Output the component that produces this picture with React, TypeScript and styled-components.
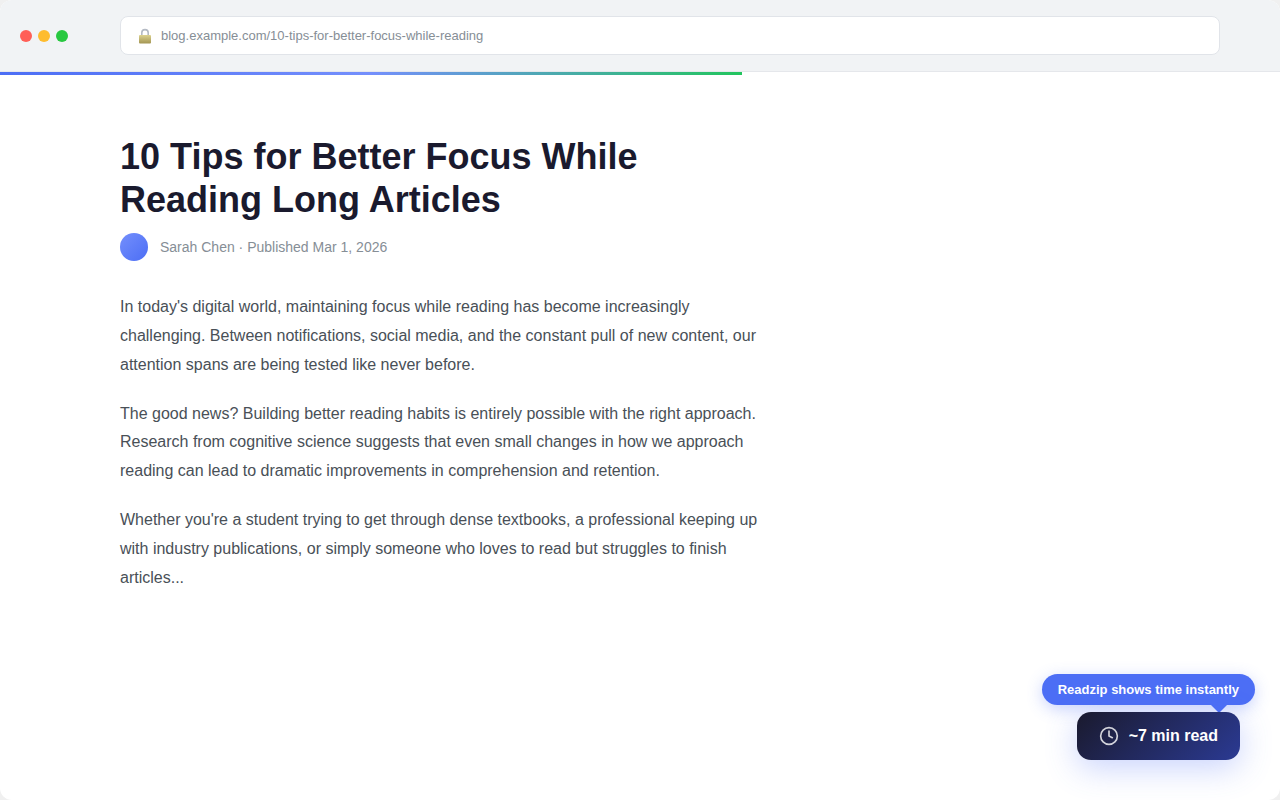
import React from "react";
import styled, { createGlobalStyle } from "styled-components";

const GlobalStyle = createGlobalStyle`
  html, body {
    margin: 0;
    padding: 0;
    height: 100%;
    background: #f0f0f0;
  }
  #root {
    height: 100%;
  }
`;

const BrowserWindow = styled.div`
  position: relative;
  width: 1280px;
  height: 800px;
  background: #ffffff;
  border-radius: 12px;
  overflow: hidden;
  font-family: "Liberation Sans", Arial, sans-serif;
`;

const Chrome = styled.header`
  height: 71px;
  display: flex;
  align-items: center;
  gap: 52px;
  padding: 0 60px 0 20px;
  background: #f1f3f5;
  border-bottom: 1px solid #e5e7eb;
`;

const Lights = styled.div`
  display: flex;
  gap: 6px;
`;

const Light = styled.span<{ $color: string }>`
  width: 12px;
  height: 12px;
  border-radius: 50%;
  background: ${(p) => p.$color};
`;

const AddressBar = styled.div`
  flex: 1;
  height: 39px;
  box-sizing: border-box;
  display: flex;
  align-items: center;
  gap: 8px;
  padding: 0 16px;
  background: #ffffff;
  border: 1px solid #e1e4e9;
  border-radius: 8px;
  font-size: 13px;
  color: #868e96;
`;

const ProgressBar = styled.div`
  width: 742px;
  height: 3px;
  background: linear-gradient(90deg, #4c6ef5 0%, #748ffc 50%, #22c55e 100%);
`;

const Article = styled.main`
  width: 640px;
  padding: 60px 0 0 120px;
`;

const Title = styled.h1`
  margin: 0 0 12px;
  font-size: 36px;
  line-height: 1.2;
  font-weight: 700;
  color: #1a1a2e;
`;

const Meta = styled.div`
  display: flex;
  align-items: center;
  gap: 12px;
  margin-bottom: 31.8px;
  font-size: 14px;
  color: #868e96;
`;

const Avatar = styled.span`
  width: 28px;
  height: 28px;
  border-radius: 50%;
  background: linear-gradient(135deg, #748ffc, #4c6ef5);
`;

const Paragraph = styled.p`
  margin: 0 0 20px;
  font-size: 16px;
  line-height: 1.8;
  color: #495057;
`;

const Widget = styled.div`
  position: absolute;
  right: 40px;
  bottom: 40px;
  display: flex;
  align-items: center;
  gap: 10px;
  height: 48px;
  padding: 0 22px;
  border-radius: 14px;
  background: linear-gradient(135deg, #1a1a2e, #2b3a93);
  box-shadow: 0 8px 32px rgba(76, 110, 245, 0.3);
  font-size: 16px;
  font-weight: 700;
  color: #ffffff;
`;

const Callout = styled.div`
  position: absolute;
  right: 25px;
  bottom: 95px;
  height: 31px;
  display: flex;
  align-items: center;
  padding: 0 16px;
  border-radius: 16px;
  background: #4c6ef5;
  box-shadow: 0 4px 16px rgba(76, 110, 245, 0.3);
  font-size: 13px;
  font-weight: 700;
  color: #ffffff;
  white-space: nowrap;

  &::after {
    content: "";
    position: absolute;
    right: 28px;
    bottom: -8px;
    border-left: 8px solid transparent;
    border-right: 8px solid transparent;
    border-top: 8px solid #4c6ef5;
  }
`;

const LockIcon = () => (
  <svg width="16" height="16" viewBox="0 0 16 16" fill="none">
    <defs>
      <linearGradient id="lockBody" x1="0" y1="0" x2="0" y2="1">
        <stop offset="0" stopColor="#dcd290" />
        <stop offset="1" stopColor="#a39552" />
      </linearGradient>
    </defs>
    <path d="M4.8 8V4.8a3.2 3.2 0 0 1 6.4 0V8" stroke="#b4bac4" strokeWidth="1.6" />
    <rect x="2" y="7" width="12" height="8.5" rx="1" fill="url(#lockBody)" />
  </svg>
);

const ClockIcon = () => (
  <svg
    width="20"
    height="20"
    viewBox="0 0 24 24"
    fill="none"
    stroke="rgba(255, 255, 255, 0.8)"
    strokeWidth="2"
    strokeLinecap="round"
    strokeLinejoin="round"
  >
    <circle cx="12" cy="12" r="10" />
    <path d="M12 6v6l4 2" />
  </svg>
);

export default function App() {
  return (
    <>
      <GlobalStyle />
      <BrowserWindow>
        <Chrome>
          <Lights>
            <Light $color="#ff5f57" />
            <Light $color="#febc2e" />
            <Light $color="#28c840" />
          </Lights>
          <AddressBar>
            <LockIcon />
            blog.example.com/10-tips-for-better-focus-while-reading
          </AddressBar>
        </Chrome>
        <ProgressBar />
        <Article>
          <Title>10 Tips for Better Focus While Reading Long Articles</Title>
          <Meta>
            <Avatar />
            Sarah Chen · Published Mar 1, 2026
          </Meta>
          <Paragraph>
            In today's digital world, maintaining focus while reading has become increasingly
            challenging. Between notifications, social media, and the constant pull of new
            content, our attention spans are being tested like never before.
          </Paragraph>
          <Paragraph>
            The good news? Building better reading habits is entirely possible with the right
            approach. Research from cognitive science suggests that even small changes in how
            we approach reading can lead to dramatic improvements in comprehension and retention.
          </Paragraph>
          <Paragraph>
            Whether you're a student trying to get through dense textbooks, a professional
            keeping up with industry publications, or simply someone who loves to read but
            struggles to finish articles...
          </Paragraph>
        </Article>
        <Callout>Readzip shows time instantly</Callout>
        <Widget>
          <ClockIcon />
          ~7 min read
        </Widget>
      </BrowserWindow>
    </>
  );
}
